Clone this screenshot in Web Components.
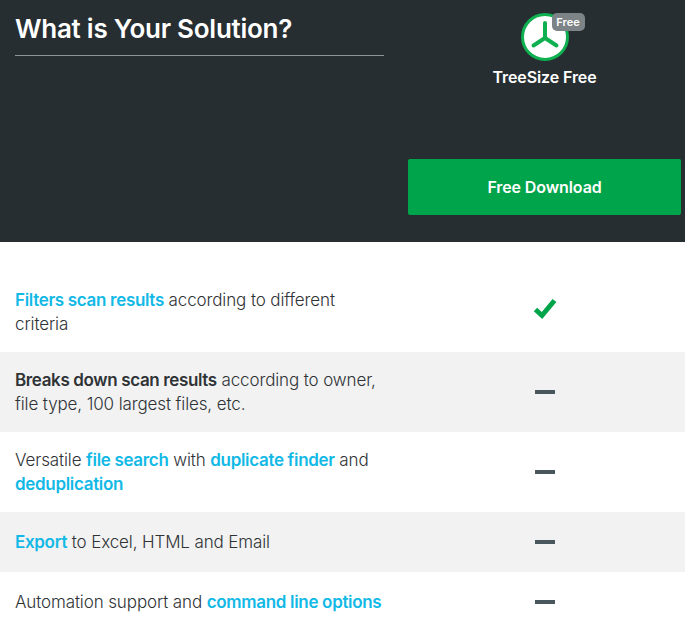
<!DOCTYPE html>
<html>
<head>
<meta charset="utf-8">
<style>
html, body { margin: 0; padding: 0; background: #fff; }
body { font-family: "Open Sans", sans-serif; overflow: hidden; }
</style>
</head>
<body>
<compare-table>
  <compare-header slot="header" heading="What is Your Solution?" product="TreeSize Free" badge="Free" action="Free Download"></compare-header>
  <feature-row mark="check"><a>Filters scan results</a> according to different criteria</feature-row>
  <feature-row shaded><b>Breaks down scan results</b> according to owner, file type, 100 largest files, etc.</feature-row>
  <feature-row>Versatile <a>file search</a> with <a>duplicate finder</a> and <a>deduplication</a></feature-row>
  <feature-row shaded short><a>Export</a> to Excel, HTML and Email</feature-row>
  <feature-row short>Automation support and <a>command line options</a></feature-row>
</compare-table>

<script>
class CompareTable extends HTMLElement {
    constructor(){
        super();
        this.attachShadow({ mode: "open" });
        this.shadowRoot.innerHTML = `
        <style>
        :host { display: block; width: 685px; }
        .rows { display: block; padding-top: 30px; }
        </style>
        <slot name="header"></slot>
        <div class="rows"><slot></slot></div>
        `;
    }
}
customElements.define('compare-table', CompareTable);

class CompareHeader extends HTMLElement {
    constructor(){
        super();
        this.attachShadow({ mode: "open" });
    }
    connectedCallback() {
        this.shadowRoot.innerHTML = `
        <style>
        :host {
            display: grid;
            grid-template-columns: 369px 273px;
            column-gap: 24px;
            height: 242px;
            box-sizing: border-box;
            padding: 0 4px 0 15px;
            background: #262e32;
            color: #fff;
        }
        h2 {
            margin: 0;
            height: 56px;
            box-sizing: border-box;
            padding-top: 12px;
            border-bottom: 1px solid #8f9496;
            font: 600 26px/33px Inter, sans-serif;
            letter-spacing: -0.25px;
        }
        .product {
            display: flex;
            flex-direction: column;
            align-items: center;
            padding-top: 13px;
            height: 242px;
            box-sizing: border-box;
        }
        .logo { position: relative; width: 48px; height: 48px; }
        .logo svg { display: block; }
        .badge {
            position: absolute;
            left: 31px;
            top: 0;
            width: 33px;
            height: 18px;
            border-radius: 5px;
            background: #7c8487;
            font: 600 11px/18px Inter, sans-serif;
            text-align: center;
        }
        .name { margin-top: 6px; font: 600 16px/20px Inter, sans-serif; letter-spacing: -0.1px; }
        .download {
            margin-top: 72px;
            width: 273px;
            height: 56px;
            border-radius: 2px;
            background: #00a44a;
            font: 600 16px/56px Inter, sans-serif;
            letter-spacing: -0.1px;
            text-align: center;
        }
        </style>
        <h2>${this.getAttribute('heading')}</h2>
        <div class="product">
            <div class="logo">
                <svg width="48" height="48" viewBox="0 0 48 48">
                    <circle cx="24" cy="24" r="22.5" fill="#fff" stroke="#0fb050" stroke-width="3"/>
                    <path d="M24 10V25L12.500 32.500M24 25l11.500 7.500" fill="none" stroke="#0fb050" stroke-width="4" stroke-linecap="round" stroke-linejoin="round"/>
                </svg>
                <span class="badge">${this.getAttribute('badge')}</span>
            </div>
            <div class="name">${this.getAttribute('product')}</div>
            <div class="download">${this.getAttribute('action')}</div>
        </div>
        `;
    }
}
customElements.define('compare-header', CompareHeader);

class FeatureRow extends HTMLElement {
    constructor(){
        super();
        this.attachShadow({ mode: "open" });
    }
    connectedCallback() {
        // a row shows a check when mark="check", otherwise a dash
        const isCheck = this.getAttribute('mark') === 'check';
        const icon = isCheck
            ? `<svg class="check" width="24" height="22" viewBox="0 0 24 22"><path d="M2.500 11.500L9 17.500L21.500 2.500" fill="none" stroke="#00a44a" stroke-width="5"/></svg>`
            : `<span class="dash"></span>`;
        this.shadowRoot.innerHTML = `
        <style>
        :host {
            display: grid;
            grid-template-columns: 369px 273px;
            column-gap: 24px;
            align-items: center;
            height: 80px;
            box-sizing: border-box;
            padding: 0 4px 0 15px;
            background: #fff;
            color: #2f3336;
            font: 300 17px/24px Inter, sans-serif;
            letter-spacing: -0.12px;
        }
        :host([shaded]) { background: #f2f2f2; }
        :host([short]) { height: 60px; }
        ::slotted(a) { color: #12b9e6; font-weight: 600; letter-spacing: -0.32px; }
        ::slotted(b) { color: #2f3336; font-weight: 600; letter-spacing: -0.36px; }
        .mark { display: flex; justify-content: center; align-items: center; }
        .check { margin-bottom: 6px; }
        .dash { display: block; width: 20px; height: 4px; background: #4a565e; }
        </style>
        <div class="text"><slot></slot></div>
        <div class="mark">${icon}</div>
        `;
    }
}
customElements.define('feature-row', FeatureRow);
</script>
</body>
</html>
